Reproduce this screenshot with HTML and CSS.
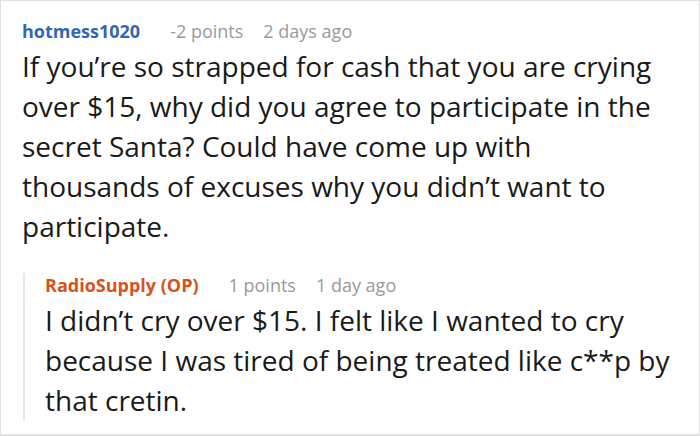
FILE: index.html
```html
<!DOCTYPE html>
<html lang="en">
<head>
<meta charset="utf-8">
<title>Comment</title>
<link rel="stylesheet" href="styles.css">
</head>
<body>
<div class="frame">
  <article class="comment">
    <div class="meta">
      <span class="author">hotmess1020</span>
      <span class="points">-2 points</span>
      <span class="time">2 days ago</span>
    </div>
    <p class="body main">If you’re so strapped for cash that you are crying over $15, why did you agree to participate in the secret Santa? Could have come up with thousands of excuses why you didn’t want to participate.</p>
    <article class="reply">
      <div class="meta">
        <span class="author op">RadioSupply (OP)</span>
        <span class="points">1 points</span>
        <span class="time">1 day ago</span>
      </div>
      <p class="body">I didn’t cry over $15. I felt like I wanted to cry because I was tired of being treated like c**p by that cretin.</p>
    </article>
  </article>
</div>
</body>
</html>
```
FILE: styles.css
```css
* { box-sizing: border-box; }
html, body { margin: 0; padding: 0; background: #fff; }
.frame {
  width: 700px;
  height: 436px;
  border: 1px solid #e2e2e2;
  border-bottom-width: 2px;
  overflow: hidden;
  font-family: "Open Sans", "Noto Sans", sans-serif;
  color: #1a1a1a;
}
.comment { padding: 18px 4px 0 21px; }
.meta {
  display: flex;
  align-items: baseline;
  font-size: 18px;
  line-height: 24px;
  color: #9a9a9a;
}
.author { font-weight: 700; color: #3466b4; margin-right: 30px; }
.author.op { color: #d6521c; }
.points { margin-right: 20px; }
.body {
  margin: 3px 0 0;
  font-size: 28px;
  line-height: 40px;
}
.body.main { margin-right: 22px; }
.reply {
  margin-top: 37px;
  margin-left: 1px;
  border-left: 2px solid #e6e6e6;
  padding-left: 20px;
}
.reply .meta { margin-top: -10px; }
.reply .body { margin-top: 3px; margin-bottom: -3px; }
```
